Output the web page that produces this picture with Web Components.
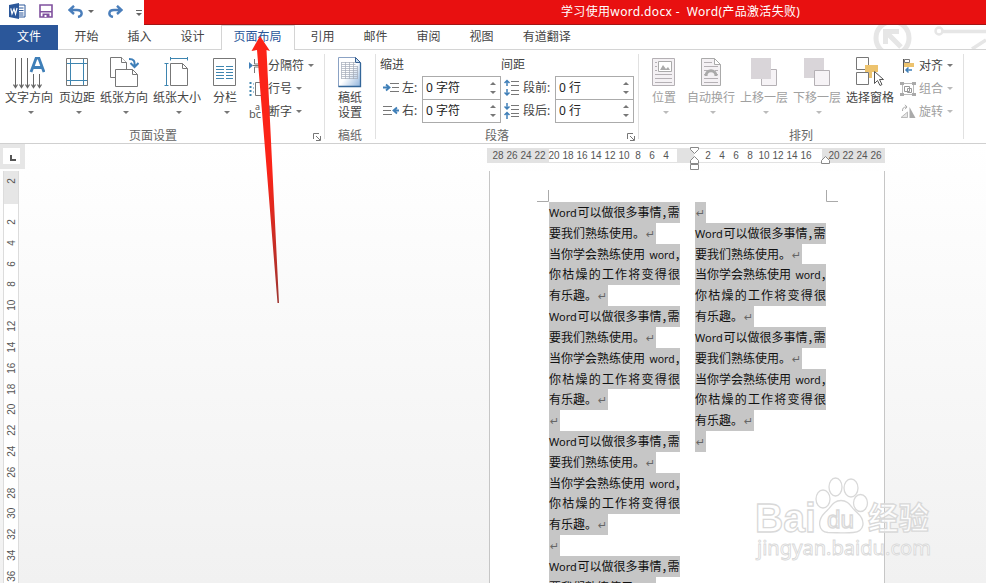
<!DOCTYPE html>
<html lang="zh-CN">
<head>
<meta charset="utf-8">
<title>学习使用word.docx - Word</title>
<style>
  body {
    margin: 0;
    width: 986px;
    height: 583px;
    overflow: hidden;
    font: 12px/16px "Noto Sans", "Noto Sans CJK SC", sans-serif;
    color: #444;
  }
</style>
</head>
<body>
<word-app></word-app>

<script>
const ICONS = {
  word: [17, 16, `<path d="M8 2h8v12H8z" fill="#fff" stroke="#2b579a"/><path d="M10 5h4.500M10 7.500h4.500M10 10h4.500M10 12h4.500" stroke="#2b579a"/><path d="M0 2l10-2v16L0 14z" fill="#2b579a"/><path d="M1.800 5.300l1.200 5.500L5 6l1.500 5L8 5" fill="none" stroke="#fff" stroke-width="1.200"/>`],
  save: [14, 14, `<path d="M1 1h12v12H1z" fill="#fff" stroke="#80519e" stroke-width="1.600"/><path d="M1 7h12v1.500H1z" fill="#80519e"/><path d="M3.500 9.500h7V13h-7z" fill="#80519e"/><path d="M5.500 11h2v2h-2z" fill="#fff"/>`],
  undo: [15, 13, `<path d="M2 5h7c6 0 6 6 1 7M6 .8L1.500 5 6 9" fill="none" stroke="#4a7ebb" stroke-width="2.400"/>`],
  redo: [15, 13, `<path d="M13 5H6C0 5 0 11 5 12M9 .8L13.500 5 9 9" fill="none" stroke="#4a7ebb" stroke-width="2.400"/>`],
  more: [6, 6, `<path d="M0 .5h6" stroke="#666"/><path d="M0 3h6L3 6z" fill="#666"/>`],
  direction: [32, 32, `<path d="M2.500 1v28M8.500 1v28M14.500 1v28M20.500 17v12M26.500 17v12" stroke="#666"/><path d="M.5 27.500l2 3 2-3M6.500 27.500l2 3 2-3M12.500 27.500l2 3 2-3M18.500 27.500l2 3 2-3M24.500 27.500l2 3 2-3" fill="none" stroke="#666" stroke-width="1.300"/><path d="M18 15L23.200 1h2.600L31 15M20 10.500h9" fill="none" stroke="#3f7fb8" stroke-width="2.800"/>`],
  margins: [24, 30, `<path d="M1.500 1.500h21v27h-21z" fill="#fff" stroke="#777"/><path d="M5.500 2v26M18.500 2v26M2 6.500h20M2 23.500h20" stroke="#3e85b0"/>`],
  orientation: [30, 32, `<path d="M9 20.500H1.500v-20h11l5 5v7" fill="#fff" stroke="#777"/><path d="M12.500.5v5h5M6.500 12.500h17l5 5v12h-22zM23.500 12.500v5h5" fill="#fff" stroke="#777"/><path d="M20 2c5 0 6 2 5.500 7M21.500 6l4 4 4-4" fill="none" stroke="#3f7fb8" stroke-width="2"/>`],
  size: [26, 32, `<path d="M6.500 6.500h12l5 5v17h-17zM18.500 6.500v5h5" fill="#fff" stroke="#777"/><path d="M6.500 1.500h17M6.500 0v3.500M23.500 0v3.500M2.500 6.500v22M.5 6.500h4M.5 28.500h4" stroke="#3e85b0"/>`],
  columns: [24, 30, `<path d="M.5 1.500h22v27H.5z" fill="#fff" stroke="#777"/><path d="M3 9.500h8M3 12.500h8M3 15.500h8M3 18.500h8M3 21.500h8M13 9.500h7M13 12.500h7M13 15.500h7M13 18.500h7M13 21.500h7" stroke="#3e85b0"/>`],
  breaks: [16, 16, `<path d="M0 4l4 3.500L0 11z" fill="#3f7fb8"/><path d="M5.500 1v5H14V1M5.500 15V9H14v6M4 7.500h12" fill="none" stroke="#777"/>`],
  lines: [16, 16, `<path d="M1.500 1v14" stroke="#3e85b0" stroke-width="2" stroke-dasharray="2 2"/><path d="M6.500 1.500h8v13h-8z" fill="none" stroke="#777"/><path d="M4 3h1M4 7h1M4 11h1" stroke="#3e85b0"/>`],
  hyphen: [16, 18, `<text x="0" y="15" font-size="11" font-family="Noto Sans" fill="#555">bc</text><text x="6" y="7" font-size="9" font-family="Noto Sans" fill="#555">a</text>`],
  manuscript: [26, 32, `<defs><linearGradient id="g" x1="0" y1="0" x2="1" y2="1"><stop offset=".5" stop-color="#fff"/><stop offset="1" stop-color="#8fb3dc"/></linearGradient></defs><path d="M1.500.5h17l5 5v24h-22z" fill="url(#g)" stroke="#8ba2c4"/><path d="M18.500.5v5h5z" fill="#c5dcf0" stroke="#375f91"/><path d="M4.500 5.500h14M4.500 9.500h16M4.500 13.500h16M4.500 17.500h16M4.500 21.500h16M4.500 7.500h14M4.500 11.500h16M4.500 15.500h16M4.500 19.500h16M4.500 5v17M8.500 5v17M12.500 5v17M16.500 5v17M20.500 9v13" stroke="#a3abb8" stroke-width=".7"/><path d="M23.500 6v23.500h-22" fill="none" stroke="#336699" stroke-width="1.300"/>`],
  indentLeft: [16, 12, `<path d="M7 1.500h9M9 5.500h7M7 9.500h9" stroke="#777"/><path d="M0 5.500h6M3 2.500l3.500 3-3.500 3" fill="none" stroke="#3f7fb8" stroke-width="1.800"/>`],
  indentRight: [16, 12, `<path d="M0 1.500h9M0 5.500h8M0 9.500h9" stroke="#777"/><path d="M16 5.500h-5M14 2.500l-3.500 3 3.500 3" fill="none" stroke="#3f7fb8" stroke-width="1.800"/>`],
  spaceBefore: [16, 18, `<path d="M3 1v6M.5 4L3 1.500 5.500 4M3 10v6M.5 13.500L3 16l2.500-2.500" fill="none" stroke="#3f7fb8" stroke-width="1.500"/><path d="M7 2.500h8M7 6.500h8M7 11.500h8M7 15.500h8" stroke="#777"/>`],
  spaceAfter: [16, 18, `<path d="M3 1v6M.5 4.500L3 7l2.500-2.500M3 10v7M.5 13L3 10.500 5.500 13" fill="none" stroke="#3f7fb8" stroke-width="1.500"/><path d="M7 3.500h8M7 7.500h8M7 11.500h8M7 14.500h8" stroke="#777"/>`],
  position: [24, 30, `<path d="M.5 1.500h22v27H.5z" fill="#f4f1f4" stroke="#b4b0b4"/><path d="M6.500 4.500h13v10h-13z" fill="#fff" stroke="#aaa"/><path d="M8 13l3-5 3 4 2-2 2 3z" fill="#aaa"/><path d="M3 5.500h2M3 9.500h2M3 13.500h2M3 17.500h17M3 21.500h17M3 25.500h17" stroke="#b4b0b4"/>`],
  wrap: [22, 30, `<path d="M1.500 1.500h13l6 6v21h-19zM14.500 1.500v6h6" fill="#f4f1f4" stroke="#aaa"/><path d="M4 5.500h8M4 9.500h14M4 13.500h4M15 13.500h3M4 17.500h2M16 17.500h2M4 21.500h14M4 25.500h14" stroke="#b4b0b4"/><path d="M6 19c0-7 10-7 10 0" fill="none" stroke="#aaa" stroke-width="3"/>`],
  forward: [28, 30, `<path d="M11.500 12.500h15v16h-15z" fill="#f6f3f6" stroke="#b4b0b4"/><path d="M1 1h20v21H1z" fill="#d9d5d9"/>`],
  backward: [28, 30, `<path d="M1 1h20v20H1z" fill="#d9d5d9"/><path d="M11.500 13.500h15v15h-15z" fill="#f6f3f6" stroke="#b4b0b4"/>`],
  pane: [28, 30, `<path d="M.5.500h12v12H.5zM.5 15.500h12v12H.5z" fill="#fff" stroke="#777"/><path d="M9 8h13v7h-6v6h-3v-6H9z" fill="#edc36e"/><path d="M18.500 14.500v12l3-3 2.500 5 2-1-2.500-5h4z" fill="#fff" stroke="#555"/>`],
  align: [16, 16, `<path d="M3.500 1v14" stroke="#555"/><path d="M4.500 1.500h5v3h-5z" fill="#fff" stroke="#777"/><path d="M4 5h10v4H4z" fill="#edc36e"/><path d="M12 12H6M8.500 9.500L6 12l2.500 2.500" fill="none" stroke="#3f7fb8" stroke-width="1.500"/>`],
  group: [16, 16, `<path d="M2.500 2.500h11v11h-11z" fill="none" stroke="#bbb"/><path d="M4.500 5.500h5v5h-5zM7.500 7.500h4v4h-4z" fill="none" stroke="#999"/><path d="M0 1h4v3H0zM12 1h4v3h-4zM0 12h4v3H0zM12 12h4v3h-4z" fill="#aaa"/>`],
  rotate: [16, 16, `<path d="M1 13.500L7.500 8v5.500z" fill="#e5e5e5" stroke="#bbb"/><path d="M9.500 3v11h6z" fill="#aaa"/><path d="M2.500 7c0-3 1-4 4-4M5 .8L7 3 5 5.200" fill="none" stroke="#aaa"/>`],
  launcher: [8, 8, `<path d="M.5 6V.5H6M3 3l4 4M7.500 3v4.500H3" fill="none" stroke="#777"/>`],
};

class WordIcon extends HTMLElement {
  constructor() {
    super();
    this.root = this.attachShadow({ mode: "open" });
  }
  connectedCallback() {
    const [w, h, shape] = ICONS[this.getAttribute("name")];
    this.root.innerHTML = `
      <style>
        :host { display: block; flex: none; width: ${w}px; height: ${h}px; }
        svg { display: block; }
      </style>
      <svg width="${w}" height="${h}" viewBox="0 0 ${w} ${h}">${shape}</svg>
    `;
  }
}
customElements.define("word-icon", WordIcon);

class TitleBar extends HTMLElement {
  constructor() {
    super();
    this.root = this.attachShadow({ mode: "open" });
    this.root.innerHTML = `
      <style>
        :host { display: flex; height: 25px; }
        .quick {
          width: 144px;
          display: flex;
          align-items: center;
          box-sizing: border-box;
          padding: 0 0 3px 9px;
          background: #fff;
        }
        .caret { border: 3px solid transparent; border-top-color: #666; border-bottom: 0; margin: 0 14px 0 5px; }
        .title {
          flex: 1;
          box-sizing: border-box;
          padding: 4px 0 0 417px;
          background: #e81010;
          border-bottom: 1px solid #a31515;
          color: #fff;
          white-space: pre;
          letter-spacing: .34px;
        }
      </style>
      <div class="quick">
        <word-icon name="word"></word-icon>
        <word-icon name="save" style="margin: 0 15px 0 13px"></word-icon>
        <word-icon name="undo"></word-icon>
        <span class="caret"></span>
        <word-icon name="redo"></word-icon>
        <word-icon name="more" style="margin: 3px 0 0 13px"></word-icon>
      </div>
      <div class="title"><slot></slot></div>
    `;
  }
}
customElements.define("title-bar", TitleBar);

class TabStrip extends HTMLElement {
  constructor() {
    super();
    this.root = this.attachShadow({ mode: "open" });
  }
  connectedCallback() {
    const tabs = this.getAttribute("tabs").split(",");
    const active = this.getAttribute("active");
    this.root.innerHTML = `
      <style>
        :host {
          display: flex;
          height: 25px;
          box-sizing: border-box;
          background: #fff;
          box-shadow: inset 0 -1px #d4d4d4;
          position: relative;
        }
        .file {
          width: 58px;
          margin-right: 2px;
          line-height: 24px;
          text-align: center;
          background: #2b579a;
          color: #fff;
        }
        .tab { padding: 0 12.5px; margin: 0 2px; line-height: 24px; }
        .active {
          color: #2b579a;
          background: #fff;
          border: solid #d4d4d4;
          border-width: 1px 1px 0;
          padding: 0 12px;
          margin: 0 1.500px;
          line-height: 22px;
        }
        .deco { position: absolute; right: 0; top: 0; }
      </style>
      <div class="file">文件</div>
      ${tabs.map((t) => `<div class="tab ${t === active ? "active" : ""}">${t}</div>`).join("")}
      <svg class="deco" width="120" height="24" fill="none" stroke="#e6e6e6">
        <circle cx="26.500" cy="13" r="16.500" stroke-width="5"/>
        <path d="M35 22L21 8M19.500 19V6.500H33" stroke-width="5"/>
        <circle cx="73" cy="6" r="3.500" stroke-width="2.500"/>
        <path d="M77 6.500h43M106 24l14-9" stroke-width="3.500"/>
      </svg>
    `;
  }
}
customElements.define("tab-strip", TabStrip);

class RibbonGroup extends HTMLElement {
  constructor() {
    super();
    this.root = this.attachShadow({ mode: "open" });
  }
  connectedCallback() {
    this.root.innerHTML = `
      <style>
        :host {
          display: flex;
          flex-direction: column;
          flex: none;
          box-sizing: border-box;
          border-right: 1px solid #e1e1e1;
          height: 85px;
        }
        .content { display: flex; height: 72px; }
        .label { display: flex; height: 14px; margin-top: -1px; color: #666; }
        .label span { flex: 1; text-align: center; padding-top: 3px; margin-left: -20px; }
        .label span:last-child { margin-left: 0; }
        word-icon { margin: 8px 3px 0 -11px; }
      </style>
      <div class="content"><slot></slot></div>
      <div class="label">
        <span>${this.getAttribute("label")}</span>
        ${this.hasAttribute("launcher") ? `<word-icon name="launcher"></word-icon>` : ""}
      </div>
    `;
  }
}
customElements.define("ribbon-group", RibbonGroup);

class RibbonButton extends HTMLElement {
  constructor() {
    super();
    this.root = this.attachShadow({ mode: "open" });
  }
  connectedCallback() {
    this.root.innerHTML = `
      <style>
        :host {
          display: flex;
          flex-direction: column;
          align-items: center;
          flex: none;
          white-space: nowrap;
        }
        :host([disabled]) { color: #a0a0a0; }
        .icon { height: 32px; margin-top: 3px; }
        .text { text-align: center; line-height: 15px; margin-top: 1px; }
        .caret { border: 3px solid transparent; border-top-color: #777; border-bottom: 0; margin: 6px 0 0 3px; }
        :host([disabled]) .caret { border-top-color: #bbb; }
      </style>
      <div class="icon"><word-icon name="${this.getAttribute("icon")}"></word-icon></div>
      <div class="text"><slot></slot></div>
      ${this.hasAttribute("plain") ? "" : `<span class="caret"></span>`}
    `;
  }
}
customElements.define("ribbon-button", RibbonButton);

class SmallButton extends HTMLElement {
  constructor() {
    super();
    this.root = this.attachShadow({ mode: "open" });
  }
  connectedCallback() {
    this.root.innerHTML = `
      <style>
        :host { display: flex; align-items: center; height: 23px; white-space: nowrap; }
        :host([disabled]) { color: #a0a0a0; }
        .text { margin-left: 3px; }
        .caret { border: 3px solid transparent; border-top-color: #777; border-bottom: 0; margin-left: 4px; }
        :host([disabled]) .caret { border-top-color: #bbb; }
      </style>
      <word-icon name="${this.getAttribute("icon")}"></word-icon>
      <span class="text"><slot></slot></span>
      <span class="caret"></span>
    `;
  }
}
customElements.define("small-button", SmallButton);

class SpinField extends HTMLElement {
  constructor() {
    super();
    this.root = this.attachShadow({ mode: "open" });
  }
  connectedCallback() {
    this.root.innerHTML = `
      <style>
        :host { display: flex; align-items: center; height: 23px; }
        .name { margin-left: 3px; flex: 1; white-space: nowrap; }
        .box {
          display: flex;
          align-items: center;
          justify-content: space-between;
          box-sizing: border-box;
          width: 79px;
          height: 24px;
          margin-bottom: -1px;
          padding: 0 4px 0 3px;
          border: 1px solid #ababab;
          background: #fff;
          color: #222;
        }
        .arrows { display: flex; flex-direction: column; gap: 6px; }
        .up, .down { border: 3px solid transparent; }
        .up { border-bottom: 3px solid #777; border-top: 0; }
        .down { border-top: 3px solid #777; border-bottom: 0; }
      </style>
      <word-icon name="${this.getAttribute("icon")}"></word-icon>
      <span class="name">${this.getAttribute("label")}</span>
      <div class="box">
        <slot></slot>
        <span class="arrows"><i class="up"></i><i class="down"></i></span>
      </div>
    `;
  }
}
customElements.define("spin-field", SpinField);

class WordRibbon extends HTMLElement {
  constructor() {
    super();
    this.root = this.attachShadow({ mode: "open" });
    this.root.innerHTML = `
      <style>
        :host {
          display: flex;
          box-sizing: border-box;
          height: 94px;
          padding-top: 4px;
          background: #fff;
          border-bottom: 1px solid #d0d0d0;
        }
        .stack { margin-left: 3px; }
        .fields { display: grid; grid-template-columns: 118px 130px; column-gap: 3px; padding-left: 7px; align-content: start; }
        .head { height: 22px; line-height: 21px; margin-left: -3px; }
      </style>
      <ribbon-group label="页面设置" launcher style="width: 325px; padding-left: 2px">
        <ribbon-button icon="direction" style="width: 54px">文字方向</ribbon-button>
        <ribbon-button icon="margins" style="width: 42px">页边距</ribbon-button>
        <ribbon-button icon="orientation" style="width: 52px">纸张方向</ribbon-button>
        <ribbon-button icon="size" style="width: 54px">纸张大小</ribbon-button>
        <ribbon-button icon="columns" style="width: 42px">分栏</ribbon-button>
        <div class="stack">
          <small-button icon="breaks">分隔符</small-button>
          <small-button icon="lines">行号</small-button>
          <small-button icon="hyphen">断字</small-button>
        </div>
      </ribbon-group>
      <ribbon-group label="稿纸" style="width: 51px">
        <ribbon-button icon="manuscript" plain style="width: 50px">稿纸<br>设置</ribbon-button>
      </ribbon-group>
      <ribbon-group label="段落" launcher style="width: 263px">
        <div class="fields">
          <div class="head">缩进</div>
          <div class="head">间距</div>
          <spin-field icon="indentLeft" label="左:">0 字符</spin-field>
          <spin-field icon="spaceBefore" label="段前:">0 行</spin-field>
          <spin-field icon="indentRight" label="右:">0 字符</spin-field>
          <spin-field icon="spaceAfter" label="段后:">0 行</spin-field>
        </div>
      </ribbon-group>
      <ribbon-group label="排列" style="width: 325px">
        <ribbon-button icon="position" disabled style="width: 50px">位置</ribbon-button>
        <ribbon-button icon="wrap" disabled style="width: 44px">自动换行</ribbon-button>
        <ribbon-button icon="forward" disabled style="width: 62px">上移一层</ribbon-button>
        <ribbon-button icon="backward" disabled style="width: 44px">下移一层</ribbon-button>
        <ribbon-button icon="pane" plain style="width: 62px">选择窗格</ribbon-button>
        <div class="stack" style="margin-left: -1px">
          <small-button icon="align">对齐</small-button>
          <small-button icon="group" disabled>组合</small-button>
          <small-button icon="rotate" disabled>旋转</small-button>
        </div>
      </ribbon-group>
    `;
  }
}
customElements.define("word-ribbon", WordRibbon);

class SideRuler extends HTMLElement {
  constructor() {
    super();
    this.root = this.attachShadow({ mode: "open" });
    let marks = "";
    for (let n = 2; n <= 36; n += 2) marks += `<span>${n}</span>`;
    this.root.innerHTML = `
      <style>
        :host { display: block; width: 25px; font: 10px "Liberation Sans", sans-serif; color: #555; }
        .corner {
          box-sizing: border-box;
          width: 25px;
          height: 25px;
          padding: 4px 5px 5px 3px;
          background: #e6e6e6;
          margin-bottom: 2px;
        }
        .corner div { height: 16px; background: #fff; }
        svg { display: block; }
        .bar { width: 14px; margin-left: 3px; border: solid #dcdcdc; border-width: 0 1px; background: #fff; }
        .top { height: 33px; background: #e6e6e6; }
        span {
          display: flex;
          align-items: center;
          justify-content: center;
          width: 14px;
          height: 20.820px;
          writing-mode: vertical-rl;
          transform: rotate(180deg);
        }
        .numbers { padding-top: 8px; }
      </style>
      <div class="corner"><div><svg width="17" height="16"><path d="M8 7v5h5" fill="none" stroke="#555" stroke-width="2"/></svg></div></div>
      <div class="bar">
        <div class="top"><span>2</span></div>
        <div class="numbers">${marks}</div>
      </div>
    `;
  }
}
customElements.define("side-ruler", SideRuler);

class TopRuler extends HTMLElement {
  constructor() {
    super();
    this.root = this.attachShadow({ mode: "open" });
    const marks = [28, 26, 24, 22, 20, 18, 16, 14, 12, 10, 8, 6, 4, "", "", 2, 4, 6, 8, 10, 12, 14, 16, "", 20, 22, 24, 26];
    this.root.innerHTML = `
      <style>
        :host {
          display: flex;
          position: relative;
          box-sizing: border-box;
          width: 398px;
          height: 15px;
          padding-left: 4px;
          border: solid #e2e2e2;
          border-width: 1px 0;
          background: linear-gradient(90deg, #e2e2e2 62px, #fff 62px 190px, #e2e2e2 190px 207px, #fff 207px 335px, #e2e2e2 335px);
          font: 10px/14px "Liberation Sans", sans-serif;
          color: #555;
        }
        span { width: 14px; text-align: center; }
        svg { position: absolute; left: 0; top: -3px; }
      </style>
      ${marks.map((m) => `<span>${m}</span>`).join("")}
      <svg width="398" height="26" fill="#fff" stroke="#888">
        <path d="M203.500 1.500h8v2l-4 4-4-4zM203.500 17.500v-3l4-4 4 4v3zM203.500 18.500h8v5h-8zM334.500 17.500v-3l4-4 4 4v3z"/>
      </svg>
    `;
  }
}
customElements.define("top-ruler", TopRuler);

const COMMA = `<span class="comma">，</span>`;
const RETURN = `<span class="ret">↵</span>`;
const PARAGRAPHS = [
  `<p class="full"><span class="latin">Word</span><span>可以做很多事情</span>${COMMA}<span>需</span></p>`,
  `<p>要我们熟练使用。${RETURN}</p>`,
  `<p class="full"><span>当你学会熟练使用</span><span class="latin lower">word</span>${COMMA}</p>`,
  `<p class="full spread">${[..."你枯燥的工作将变得很"].map((c) => `<span>${c}</span>`).join("")}</p>`,
  `<p>有乐趣。${RETURN}</p>`,
].join("");
const EMPTY = `<p>${RETURN}</p>`;

class DocumentPage extends HTMLElement {
  constructor() {
    super();
    this.root = this.attachShadow({ mode: "open" });
    this.root.innerHTML = `
      <style>
        :host {
          display: block;
          position: relative;
          box-sizing: border-box;
          width: 396px;
          height: 412px;
          padding: 31px 0 0 59px;
          border: solid #c6c6c6;
          border-width: 0 1px;
          background: #fff;
          overflow: hidden;
          color: #111;
        }
        .columns { display: flex; gap: 15px; }
        .column { width: 131px; display: flex; flex-direction: column; align-items: flex-start; }
        p {
          margin: 0;
          height: 20.820px;
          line-height: 22px;
          background: #c6c6c6;
          white-space: nowrap;
          display: flex;
          flex: none;
        }
        .full { width: 131px; }
        .spread { justify-content: space-between; }
        .latin { width: 28.500px; font-size: 11px; }
        .lower { width: 26px; margin-left: 4.500px; font-size: 10.500px; }
        .comma { width: 6px; font-family: "Noto Sans CJK SC", sans-serif; font-feature-settings: "halt"; }
        .ret { width: 11px; font: 11px/23px "DejaVu Sans", sans-serif; color: #666; text-align: center; }
        svg { position: absolute; left: 0; top: 0; }
      </style>
      <svg width="394" height="40" fill="none" stroke="#aaa">
        <path d="M47 30.500h11.500V19M348 30.500h-11.500V19"/>
      </svg>
      <div class="columns">
        <div class="column">${PARAGRAPHS}${PARAGRAPHS}${EMPTY}${PARAGRAPHS}${EMPTY}${PARAGRAPHS}</div>
        <div class="column">${EMPTY}${PARAGRAPHS}${PARAGRAPHS}${EMPTY}</div>
      </div>
    `;
  }
}
customElements.define("document-page", DocumentPage);

class SiteWatermark extends HTMLElement {
  constructor() {
    super();
    this.root = this.attachShadow({ mode: "open" });
    this.root.innerHTML = `
      <style>
        :host { display: block; position: absolute; left: 750px; top: 470px; }
        svg { display: block; font-family: "Liberation Sans", "Noto Sans CJK SC", sans-serif; font-weight: bold; }
      </style>
      <svg width="190" height="100" fill="#fff" stroke="#d9d9d9" stroke-width="1.300" fill-opacity=".75">
        <text x="5" y="62" font-size="40" textLength="61" lengthAdjust="spacingAndGlyphs">Bai</text>
        <ellipse cx="73" cy="29" rx="7" ry="9"/>
        <ellipse cx="85.500" cy="17" rx="6.500" ry="9"/>
        <ellipse cx="101" cy="18" rx="7" ry="9"/>
        <ellipse cx="110.500" cy="33" rx="7" ry="8.500"/>
        <path d="M91 30.500c8 0 10 7 16 12 9 8 8 19-4 20-8 1-16 0-25 0-10-1-11-12-3-20 6-5 8-12 16-12z"/>
        <text x="77" y="58" font-size="23" font-weight="400" textLength="27" lengthAdjust="spacingAndGlyphs">du</text>
        <text x="118" y="59" font-size="31" font-family="Noto Sans CJK SC" textLength="61" lengthAdjust="spacingAndGlyphs">经验</text>
        <text x="7" y="85" font-size="20" font-family="Noto Sans" font-weight="400" stroke-width=".9" textLength="174" lengthAdjust="spacingAndGlyphs">jingyan.baidu.com</text>
      </svg>
    `;
  }
}
customElements.define("site-watermark", SiteWatermark);

class PointerArrow extends HTMLElement {
  constructor() {
    super();
    this.root = this.attachShadow({ mode: "open" });
    this.root.innerHTML = `
      <style>
        :host { display: block; position: absolute; left: 250px; top: 36px; z-index: 2; }
        svg { display: block; }
      </style>
      <svg width="32" height="270">
        <defs>
          <linearGradient id="red" x1="0" y1="0" x2="0" y2="1">
            <stop offset=".5" stop-color="#fb2418"/>
            <stop offset="1" stop-color="#9e3530"/>
          </linearGradient>
        </defs>
        <path d="M10 0l10 15-3.500-1L29 267h-1.500L7 14l-5.500 1z" fill="url(#red)"/>
      </svg>
    `;
  }
}
customElements.define("pointer-arrow", PointerArrow);

class WordApp extends HTMLElement {
  constructor() {
    super();
    this.root = this.attachShadow({ mode: "open" });
    this.root.innerHTML = `
      <style>
        :host { display: block; position: relative; width: 986px; height: 583px; overflow: hidden; }
        .canvas {
          display: flex;
          height: 439px;
          background: linear-gradient(#fff, #f1f1f1);
        }
        .sheet { margin-left: 462px; padding-top: 4px; }
        document-page { margin: 8px 0 0 2px; }
      </style>
      <title-bar>学习使用word.docx -  Word(产品激活失败)</title-bar>
      <tab-strip tabs="开始,插入,设计,页面布局,引用,邮件,审阅,视图,有道翻译" active="页面布局"></tab-strip>
      <word-ribbon></word-ribbon>
      <div class="canvas">
        <side-ruler></side-ruler>
        <div class="sheet">
          <top-ruler></top-ruler>
          <document-page></document-page>
        </div>
      </div>
      <site-watermark></site-watermark>
      <pointer-arrow></pointer-arrow>
    `;
  }
}
customElements.define("word-app", WordApp);
</script>
</body>
</html>
